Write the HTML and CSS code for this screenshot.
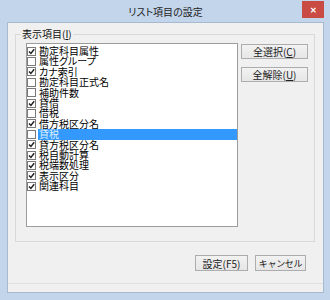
FILE: index.html
```html
<!DOCTYPE html>
<html lang="ja">
<head>
    <meta charset="UTF-8">
    <title>リスト項目の設定</title>
    <link rel="stylesheet" href="styles.css">
</head>
<body>
    <div class="window">
        <div class="titlebar">
            <span class="title">リスト項目の設定</span>
            <span class="close">&#x2715;</span>
        </div>
        <div class="client">
            <fieldset class="group">
                <legend>表示項目(<u>I</u>)</legend>
                <div class="group-body">
                    <ul class="list">
                        <li class="item"><span class="check on"></span><span class="label">勘定科目属性</span></li>
                        <li class="item"><span class="check"></span><span class="label">属性グループ</span></li>
                        <li class="item"><span class="check on"></span><span class="label">カナ索引</span></li>
                        <li class="item"><span class="check"></span><span class="label">勘定科目正式名</span></li>
                        <li class="item"><span class="check"></span><span class="label">補助件数</span></li>
                        <li class="item"><span class="check on"></span><span class="label">貸借</span></li>
                        <li class="item"><span class="check"></span><span class="label">借税</span></li>
                        <li class="item"><span class="check on"></span><span class="label">借方税区分名</span></li>
                        <li class="item selected"><span class="check"></span><span class="label">貸税</span></li>
                        <li class="item"><span class="check on"></span><span class="label">貸方税区分名</span></li>
                        <li class="item"><span class="check on"></span><span class="label">税自動計算</span></li>
                        <li class="item"><span class="check on"></span><span class="label">税端数処理</span></li>
                        <li class="item"><span class="check on"></span><span class="label">表示区分</span></li>
                        <li class="item"><span class="check on"></span><span class="label">関連科目</span></li>
                    </ul>
                    <div class="side-buttons">
                        <button class="btn wide">全選択(<u>C</u>)</button>
                        <button class="btn wide">全解除(<u>U</u>)</button>
                    </div>
                </div>
            </fieldset>
            <div class="footer">
                <button class="btn ok">設定(F5)</button>
                <button class="btn cancel">キャンセル</button>
            </div>
            <div class="separator"></div>
        </div>
    </div>
</body>
</html>
```

FILE: styles.css
```css
* {
    box-sizing: border-box;
}
body {
    margin: 0;
    background-color: #c3d5eb;
    font-family: "Noto Sans CJK JP", "Noto Sans", sans-serif;
    font-size: 10px;
    color: #000;
    font-feature-settings: "palt";
}
.window {
    width: 330px;
    height: 300px;
    display: flex;
    flex-direction: column;
    padding: 0 6px 7px 7px;
    background-color: #c3d5eb;
}
.titlebar {
    height: 22px;
    display: grid;
    grid-template-columns: 1fr auto 1fr;
    align-items: start;
}
.title {
    grid-column: 2;
    padding-top: 2px;
    line-height: 20px;
    font-size: 10px;
    color: #222;
}
.close {
    grid-column: 3;
    justify-self: end;
    width: 22px;
    height: 17px;
    margin-top: 1px;
    background-color: #c94b44;
    color: #fff;
    font-size: 8px;
    font-weight: bold;
    line-height: 17px;
    text-align: center;
}
.client {
    flex: 1;
    display: flex;
    flex-direction: column;
    background-color: #f0f0f0;
    border: 1px solid #a7b9cf;
}
.group {
    width: 300px;
    margin: 5px 0 0 7px;
    padding: 3px 6px 14px 10px;
    border: 1px solid #d9d9d9;
    min-inline-size: 0;
}
.group legend {
    margin-left: -5px;
    padding: 0 1px;
    line-height: 12px;
    color: #111;
}
.group-body {
    display: flex;
    align-items: flex-start;
}
.list {
    width: 213px;
    height: 184px;
    margin: 0;
    padding: 2px 0 0 0;
    list-style: none;
    background-color: #fff;
    border: 1px solid #9c9c9c;
}
.item {
    display: flex;
    align-items: center;
    height: 10.4px;
}
.check {
    width: 9px;
    height: 9px;
    flex: none;
    border: 1px solid #7a7a7a;
    background-color: #fff;
}
.check.on {
    background: #fff url("data:image/svg+xml;utf8,<svg xmlns='http://www.w3.org/2000/svg' width='7' height='7'><path d='M1 3.4 L2.9 5.4 L6.2 1.2' fill='none' stroke='%23222' stroke-width='1.5'/></svg>") no-repeat center;
}
.label {
    flex: 1;
    margin-left: 2px;
    padding-left: 1px;
    line-height: 10.4px;
    white-space: nowrap;
}
.selected .label {
    background-color: #3399ff;
    color: #dbeeff;
}
.side-buttons {
    display: flex;
    flex-direction: column;
    gap: 8px;
    margin: 1px 0 0 3px;
}
.btn {
    height: 15px;
    padding: 0;
    font-family: inherit;
    font-size: 10px;
    line-height: 13px;
    color: #222;
    white-space: nowrap;
    background: linear-gradient(#f2f2f2, #e6e6e6);
    border: 1px solid #adadad;
}
.btn.wide {
    width: 67px;
}
.footer {
    display: flex;
    justify-content: flex-end;
    gap: 7px;
    margin-top: 13px;
    padding-right: 17px;
}
.footer .btn {
    height: 16px;
}
.btn.ok {
    width: 53px;
}
.btn.cancel {
    width: 51px;
    font-size: 9px;
    letter-spacing: -0.3px;
}
.separator {
    margin-top: 12px;
    border-top: 1px solid #dfdfdf;
}
```
